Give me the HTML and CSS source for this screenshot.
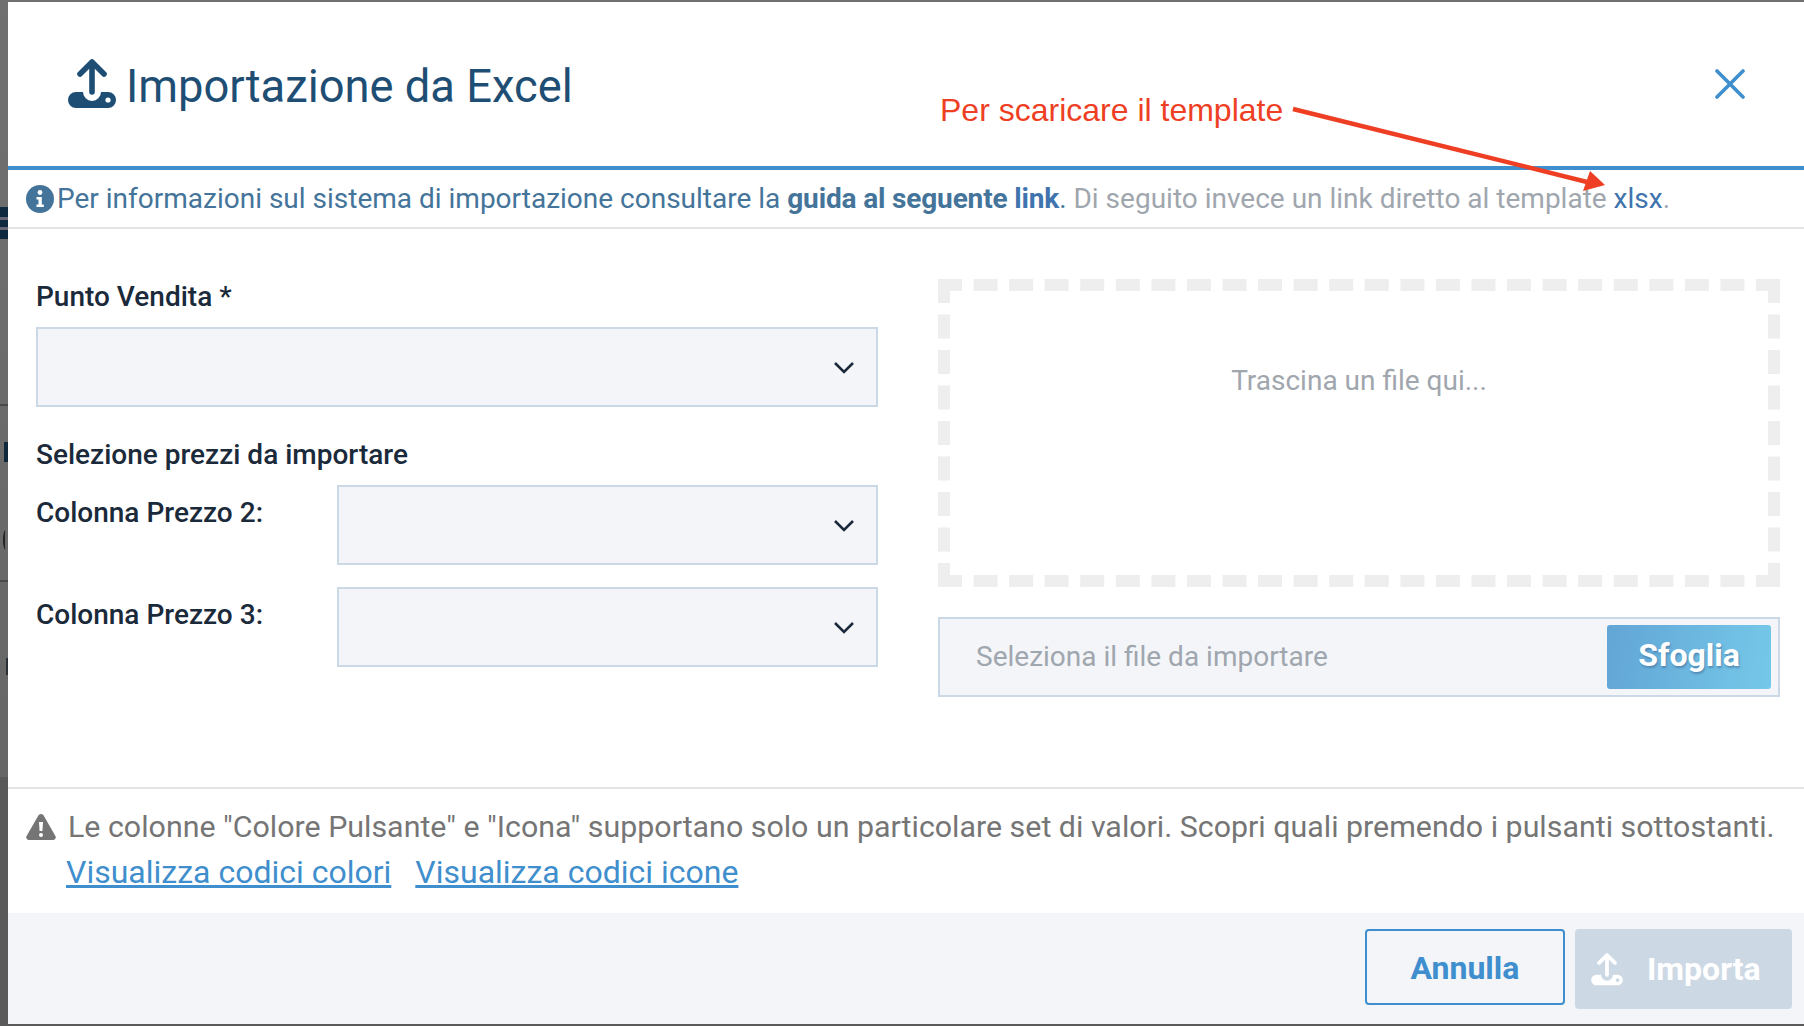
FILE: index.html
```html
<!DOCTYPE html>
<html lang="en">
<head>
  <meta charset="UTF-8">
  <meta name="viewport" content="width=device-width, initial-scale=1.0">
  <title>Importazione da Excel</title>
  <link rel="stylesheet" href="styles.css">
</head>
<body>
  <!-- bits of the page behind the modal, visible in the strip on the left -->
  <div class="bit bit-e"></div>
  <div class="bit bit-line bit-line-1"></div>
  <div class="bit bit-p"></div>
  <div class="bit bit-c"></div>
  <div class="bit bit-line bit-line-2"></div>
  <div class="bit bit-i"></div>

  <div class="modal">
    <div class="modal-header">
      <svg class="title-icon" viewBox="0 0 48 50" width="48" height="50">
        <path d="M24 3 L36 15 M24 3 L12 15 M24 3 V33" fill="none" stroke="#1f4e74" stroke-width="5.6" stroke-linecap="round"/>
        <path d="M8 33 H15 A9 9 0 0 0 33 33 H40 A8 8 0 0 1 48 41 A8 8 0 0 1 40 49 H8 A8 8 0 0 1 0 41 A8 8 0 0 1 8 33 Z" fill="#1f4e74"/>
        <circle cx="40" cy="41" r="2.6" fill="#fff"/>
      </svg>
      <h1 class="title">Importazione da Excel</h1>
      <svg class="close-icon" viewBox="0 0 30 30" width="30" height="30">
        <path d="M2 2 L28 28 M28 2 L2 28" stroke="#3f8ecd" stroke-width="3.6" stroke-linecap="round"/>
      </svg>
    </div>

    <div class="info-row">
      <svg class="info-icon" viewBox="0 0 28 28" width="28" height="28">
        <circle cx="14" cy="14" r="14" fill="#44749a"/>
        <circle cx="14" cy="7.5" r="2.4" fill="#fff"/>
        <path d="M10.5 12 H15.8 V19.5 H17.8 V22 H10.5 V19.5 H12.5 V14.5 H10.5 Z" fill="#fff"/>
      </svg>
      <span>Per informazioni sul sistema di importazione consultare la <b>guida al seguente <span class="link">link</span></b>. <span class="muted">Di seguito invece un link diretto al template</span> <span class="link">xlsx</span><span class="muted">.</span></span>
    </div>

    <div class="form-area">
      <div class="form-left">
        <label class="field-label">Punto Vendita *</label>
        <div class="select-box"><svg class="chevron" viewBox="0 0 22 14" width="22" height="14"><path d="M2 2 L11 11 L20 2" fill="none" stroke="#1b2a3a" stroke-width="2.6"/></svg></div>
        <div class="section-label">Selezione prezzi da importare</div>
        <div class="price-row">
          <label class="field-label">Colonna Prezzo 2:</label>
          <div class="select-box"><svg class="chevron" viewBox="0 0 22 14" width="22" height="14"><path d="M2 2 L11 11 L20 2" fill="none" stroke="#1b2a3a" stroke-width="2.6"/></svg></div>
        </div>
        <div class="price-row">
          <label class="field-label">Colonna Prezzo 3:</label>
          <div class="select-box"><svg class="chevron" viewBox="0 0 22 14" width="22" height="14"><path d="M2 2 L11 11 L20 2" fill="none" stroke="#1b2a3a" stroke-width="2.6"/></svg></div>
        </div>
      </div>
      <div class="form-right">
        <div class="dropzone">Trascina un file qui...</div>
        <div class="file-input">
          <span class="file-placeholder">Seleziona il file da importare</span>
          <button class="browse-btn">Sfoglia</button>
        </div>
      </div>
    </div>

    <div class="notice">
      <div class="notice-line">
        <svg class="warn-icon" viewBox="0 0 30 26" width="30" height="26">
          <path d="M15 0 C16.4 0 17.2 .8 17.8 1.8 L29.4 22 C30.4 23.8 29.2 26 27.2 26 H2.8 C.8 26 -.4 23.8 .6 22 L12.2 1.8 C12.8 .8 13.6 0 15 0 Z" fill="#757575"/>
          <path d="M13 8 H17 L16.4 17 H13.6 Z" fill="#fff"/>
          <circle cx="15" cy="21" r="2" fill="#fff"/>
        </svg>
        <span>Le colonne "Colore Pulsante" e "Icona" supportano solo un particolare set di valori. Scopri quali premendo i pulsanti sottostanti.</span>
      </div>
      <div class="notice-links">
        <a href="#">Visualizza codici colori</a>
        <a href="#">Visualizza codici icone</a>
      </div>
    </div>

    <div class="modal-footer">
      <button class="btn-cancel">Annulla</button>
      <button class="btn-import">
        <svg viewBox="0 0 48 50" width="32" height="33">
          <path d="M24 3 L36 15 M24 3 L12 15 M24 3 V33" fill="none" stroke="#fff" stroke-width="5.6" stroke-linecap="round"/>
          <path d="M8 33 H15 A9 9 0 0 0 33 33 H40 A8 8 0 0 1 48 41 A8 8 0 0 1 40 49 H8 A8 8 0 0 1 0 41 A8 8 0 0 1 8 33 Z" fill="#fff"/>
          <circle cx="40" cy="41" r="2.8" fill="#cdd8e5"/>
        </svg>
        Importa
      </button>
    </div>
  </div>

  <!-- annotation drawn on top of the screenshot -->
  <div class="note-text">Per scaricare il template</div>
  <svg class="note-arrow" viewBox="0 0 330 100" width="330" height="100">
    <path d="M2 6 L296 79" stroke="#ee3f24" stroke-width="4.4"/>
    <path d="M314 82 L292 88 L299 68 Z" fill="#ee3f24"/>
  </svg>
</body>
</html>
```

FILE: styles.css
```css
html, body {
  height: 100%;
}

body {
  margin: 0;
  overflow: hidden;
  padding: 2px 0 2px 8px;
  box-sizing: border-box;
  background: linear-gradient(#707070, #666666 75.7%, #5a5a5a 75.7%);
  font-family: Roboto, "Liberation Sans", sans-serif;
  color: #1b2a3a;
}

.bit {
  position: absolute;
  left: 0;
  width: 8px;
}

.bit-e {
  top: 207px;
  height: 32px;
  background: linear-gradient(#0f2a40 30%, #667 30%, #667 40%, #0f2a40 40%, #0f2a40 62%, #667 62%, #667 72%, #0f2a40 72%);
}

.bit-line {
  height: 2px;
  background-color: #4a4a4a;
}

.bit-line-1 {
  top: 404px;
}

.bit-line-2 {
  top: 580px;
}

.bit-p {
  top: 442px;
  left: 4px;
  width: 4px;
  height: 20px;
  background-color: #10283c;
}

.bit-c {
  top: 530px;
  left: 3px;
  width: 5px;
  height: 20px;
  border-left: 2px solid #222;
  border-radius: 50% 0 0 50%;
  box-sizing: border-box;
}

.bit-i {
  top: 658px;
  left: 6px;
  width: 2px;
  height: 17px;
  background-color: #2a2f35;
}

.modal {
  height: 100%;
  display: flex;
  flex-direction: column;
  background-color: #fff;
}

.modal-header {
  height: 168px;
  flex: none;
  box-sizing: border-box;
  display: flex;
  align-items: center;
  padding: 0 59px 0 60px;
  border-bottom: 4px solid #3f8ecd;
}

.title-icon {
  margin-right: 10px;
}

.title {
  margin: 0;
  padding-top: 4px;
  flex: 1;
  font-family: Roboto, sans-serif;
  font-size: 45.3px;
  font-weight: 400;
  color: #1f4e74;
}

.info-row {
  height: 59px;
  flex: none;
  box-sizing: border-box;
  display: flex;
  align-items: center;
  gap: 3px;
  padding: 0 0 0 18px;
  border-bottom: 2px solid #e4e4e4;
  font-size: 28px;
  color: #44749a;
}

.info-row b {
  letter-spacing: -0.15px;
}

.link {
  color: #3f74ae;
}

.muted {
  color: #a0a6ae;
}

.form-area {
  height: 560px;
  flex: none;
  box-sizing: border-box;
  display: flex;
  justify-content: space-between;
  padding: 51px 24px 0 28px;
  border-bottom: 2px solid #e4e4e4;
}

.form-left, .form-right {
  width: 842px;
}

.field-label {
  font-size: 28px;
  font-weight: 500;
}

.select-box {
  height: 80px;
  box-sizing: border-box;
  display: flex;
  align-items: center;
  justify-content: flex-end;
  padding: 2px 21px 0 0;
  background-color: #f3f5f9;
  border: 2px solid #cbd8e6;
}

.form-left > .field-label {
  display: block;
  line-height: 34px;
  margin-bottom: 13px;
}

.section-label {
  font-size: 28px;
  font-weight: 500;
  line-height: 32px;
  margin-top: 32px;
  margin-bottom: 14px;
}

.price-row {
  display: flex;
  margin-bottom: 22px;
}

.price-row .field-label {
  width: 301px;
  flex: none;
  padding-top: 11px;
}

.price-row .select-box {
  flex: 1;
}

.dropzone {
  height: 308px;
  box-sizing: border-box;
  margin-top: -1px;
  padding-top: 74px;
  border: 12px dashed #eeeeee;
  text-align: center;
  font-size: 28px;
  line-height: 32px;
  color: #a0a6ae;
}

.file-input {
  height: 80px;
  box-sizing: border-box;
  margin-top: 30px;
  display: flex;
  align-items: center;
  justify-content: space-between;
  padding: 0 7px 0 36px;
  background-color: #f3f5f9;
  border: 2px solid #cbd8e6;
}

.file-placeholder {
  padding-bottom: 2px;
  font-size: 28px;
  color: #a0a6ae;
}

.browse-btn {
  width: 164px;
  height: 64px;
  padding: 0 0 4px;
  border: none;
  border-radius: 3px;
  background: linear-gradient(100deg, #62a5d6, #75c8e9);
  color: #fff;
  font-family: Roboto, sans-serif;
  font-size: 32px;
  font-weight: 700;
  text-shadow: 1px 2px 2px rgba(60, 100, 140, 0.5);
}

.notice {
  height: 124px;
  flex: none;
  box-sizing: border-box;
  padding: 20px 0 0 18px;
  font-size: 30.36px;
  color: #757575;
}

.notice-line {
  display: flex;
  align-items: center;
  gap: 12px;
  line-height: 36px;
  white-space: nowrap;
}

.notice-links {
  display: flex;
  gap: 24px;
  margin-top: 9px;
  padding-left: 40px;
  font-size: 32px;
  line-height: 36px;
}

.notice-links a {
  color: #3f8ecd;
}

.modal-footer {
  flex: 1;
  display: flex;
  justify-content: flex-end;
  align-items: flex-start;
  gap: 10px;
  padding: 16px 12px 0 0;
  background-color: #f3f5f9;
}

.btn-cancel, .btn-import {
  font-family: Roboto, sans-serif;
  font-size: 32px;
  font-weight: 700;
  border-radius: 4px;
}

.btn-cancel {
  width: 200px;
  height: 76px;
  padding: 2px 0 0;
  color: #3f8ecd;
  background: transparent;
  border: 2px solid #3f8ecd;
}

.btn-import {
  width: 217px;
  height: 80px;
  display: flex;
  align-items: center;
  gap: 24px;
  padding: 0 0 0 16px;
  color: #fff;
  background-color: #cdd8e5;
  border: none;
}

.note-text {
  position: absolute;
  left: 940px;
  top: 91px;
  font-family: "Liberation Sans", sans-serif;
  font-size: 32px;
  line-height: 38px;
  color: #ee3f24;
}

.note-arrow {
  position: absolute;
  left: 1291px;
  top: 103px;
}
```
